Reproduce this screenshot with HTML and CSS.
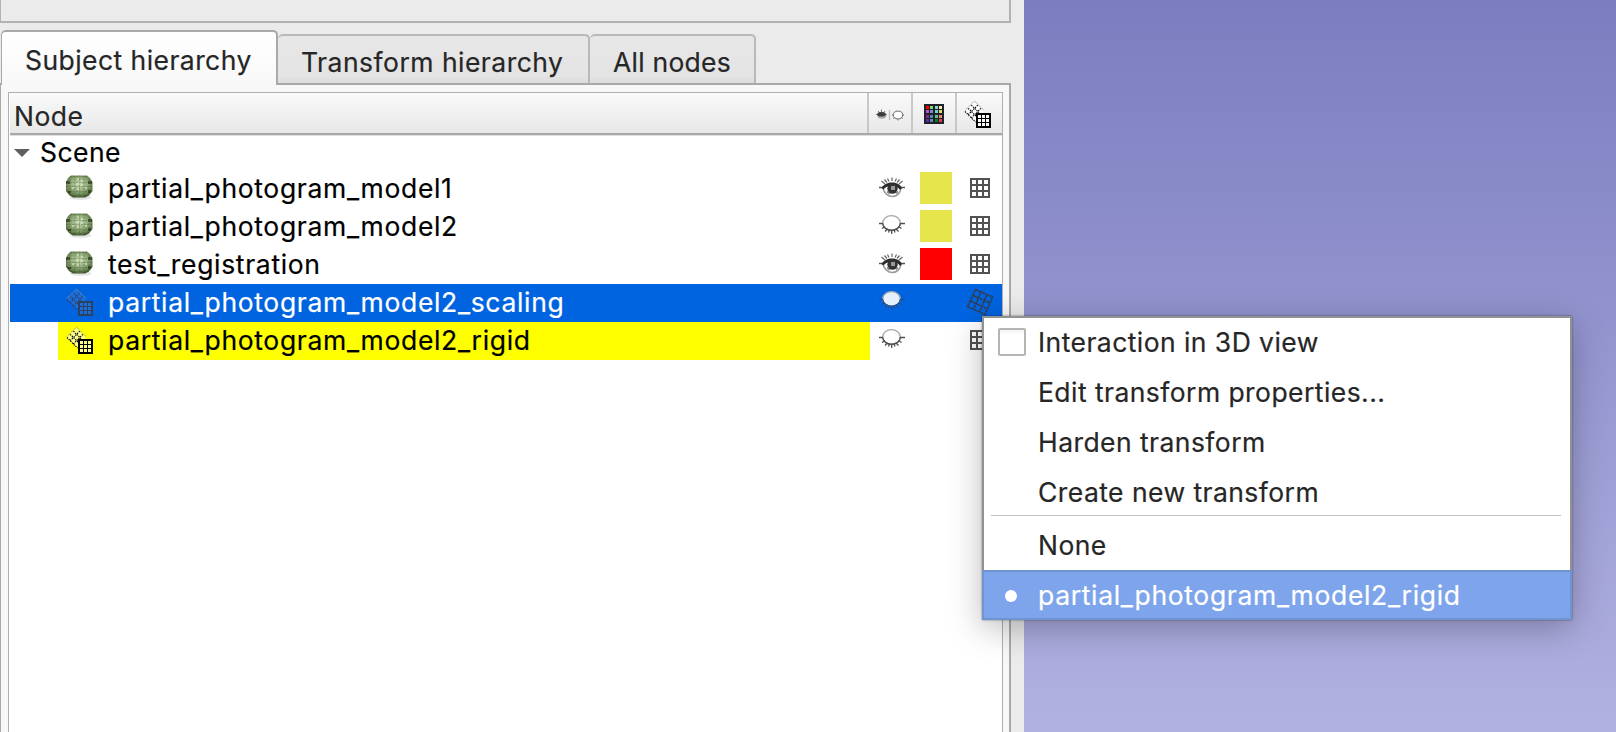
FILE: index.html
```html
<!DOCTYPE html>
<html lang="en">
<head>
<meta charset="utf-8">
<title>Subject hierarchy</title>
<link rel="stylesheet" href="styles.css">
</head>
<body>
<svg class="defs" width="0" height="0">
  <defs>
    <radialGradient id="ballFill" cx="0.5" cy="0.4" r="0.62">
      <stop offset="0" stop-color="#c9dab2"/><stop offset="0.5" stop-color="#93ac7b"/><stop offset="0.85" stop-color="#607a4b"/><stop offset="1" stop-color="#3b4d28"/>
    </radialGradient>
    <symbol id="ball" viewBox="0 0 30 28">
      <ellipse cx="15.5" cy="23.500" rx="11" ry="2.500" fill="#000" opacity="0.1"/>
      <path d="M6 1.500H22L25 4L27.500 8V17L24 21.500L20 23.500H8L4 21L1 17V8L3 4Z" fill="url(#ballFill)"/>
      <path d="M5 2.500H23M2 8.500H27M1 12.500H27M2 17.500H26M6 21.500H22M10 2V23M14.500 1.500V23.500M19 2V23M5 5V20M24 5V20" stroke="#33461f" stroke-width="1" opacity="0.32" stroke-dasharray="2 1"/>
      <path d="M12 4h2v2h-2zM16 6h2v2h-2zM11 9h2v2h-2zM16 10h2v2h-2zM7 13h2v2h-2zM12 14h2v2h-2zM20 13h2v2h-2z" fill="#dbe8c8" opacity="0.6"/>
      <path d="M1 7h4v3h-4zM23 7h4v3h-4zM3 17h3v2h-3zM23 16h3v3h-3z" fill="#1f2b14" opacity="0.6"/>
    </symbol>
    <symbol id="eye" viewBox="0 0 26 21">
      <path d="M13 0.500V4M8.500 1.500L10 4.500M17.500 1.500L16 4.500M2.500 4L6 7M23.500 4L20 7M5.500 2.500L8 5.500M20.500 2.500L18 5.500" stroke="#666" stroke-width="1.200"/>
      <path d="M0 10.500H5M21 10.500H26" stroke="#555" stroke-width="1.400"/>
      <path d="M4 11C5 16 9 19.500 13.500 19.500C18 19.500 21.500 16 22 11" fill="#fff" stroke="#999" stroke-width="1.500"/>
      <path d="M2.500 11C5 7 9 5.500 13 5.500C17 5.500 21 7 23 11L21 13C19 10 17 9 13 9C9 9 6 10 4.500 12.500Z" fill="#2a2a2a"/>
      <circle cx="13.500" cy="11.500" r="5.200" fill="#333"/>
      <rect x="12" y="9" width="4" height="4" fill="#999"/>
      <path d="M8 14.500L10.500 17M19 14.500L17 16.500" stroke="#777" stroke-width="1.200"/>
    </symbol>
    <symbol id="closed" viewBox="0 0 26 21">
      <ellipse class="lid" cx="12.500" cy="8" rx="8.800" ry="7.300" stroke="#a8a8a8" stroke-width="1.300"/>
      <path class="lash" d="M3.500 8C4 12.500 8 15.300 12.500 15.300C17 15.300 21 12.500 21.500 8" fill="none" stroke-width="1.400"/>
      <path class="lash" d="M0 8.500H4M21 8.500H26M3 13.500L6 11.500M22.500 13.500L19.500 11.500M6 16.500L8.500 14M19.500 16.500L17 14M9.500 17.500L10.500 15M12.700 15V19M16 17.500L15 15" stroke-width="1.300"/>
    </symbol>
    <symbol id="grid" viewBox="0 0 20 20">
      <path d="M1 1H19V19H1ZM7 1V19M13 1V19M1 7H19M1 13H19" fill="#fff" stroke="#525252" stroke-width="2"/>
    </symbol>
    <symbol id="xform" viewBox="0 0 28 28">
      <path d="M1 11.500L10.500 2L20 11.500L10.500 21Z" class="cell"/>
      <path d="M1 10.500L10.500 1L20 10.500" fill="none" stroke="#999" stroke-width="1" stroke-dasharray="1.400 0.700"/>
      <path d="M1 11.500L11.500 22M4.200 8.300L13.700 17.800M7.400 5.100L15 12.700M4.200 14.700L13.700 5.200M7.400 17.900L17 8.300" fill="none" stroke="currentColor" stroke-width="1.100" stroke-dasharray="1.400 1"/>
      <rect x="12" y="13" width="15" height="15" class="cell"/>
      <path d="M12 13H27V28H12ZM14 15V18H17V15ZM18 15V18H21V15ZM22 15V18H25V15ZM14 19V22H17V19ZM18 19V22H21V19ZM22 19V22H25V19ZM14 23V26H17V23ZM18 23V26H21V23ZM22 23V26H25V23Z" fill="currentColor" fill-rule="evenodd"/>
    </symbol>
    <symbol id="tilted" viewBox="0 0 28 28">
      <path d="M9.500 1.500L26.500 9L19 26.500L1.500 18.500ZM15 4L7.500 21.500M21 6.500L13.500 24M7 7.500L24 15M4.500 13L21.500 21" fill="none" stroke="#353c46" stroke-width="1.500" stroke-dasharray="3 0.600"/>
    </symbol>
  </defs>
</svg>
<div class="app">
  <div class="panel">
    <div class="upper"></div>
    <div class="tabs">
      <div class="tab active">Subject hierarchy</div>
      <div class="tab second">Transform hierarchy</div>
      <div class="tab third">All nodes</div>
    </div>
    <div class="pane">
      <div class="tree">
        <div class="header">
          <div class="h-name">Node</div>
          <div class="h-cell"><svg class="h-eyes" viewBox="0 0 28 14">
            <path d="M0 6.500H11M2 3L4 5M5.500 1.500V4M9 3L7.500 5" stroke="#777" stroke-width="1"/>
            <ellipse cx="5.800" cy="7.500" rx="4.500" ry="3.200" fill="#aaa"/><ellipse cx="5.500" cy="6.200" rx="4.200" ry="2.300" fill="#3c3c3c"/>
            <path d="M13.500 2V12" stroke="#c2c2c2" stroke-width="1.400"/>
            <ellipse cx="22" cy="7" rx="4.800" ry="3.900" fill="#fff" stroke="#8a8a8a" stroke-width="1.200"/>
            <path d="M16 7H18M26 7H28M17.500 10.500L19 9M26.500 10.500L25 9M22 11V12.500" stroke="#777"/>
          </svg></div>
          <div class="h-cell"><svg class="h-palette" viewBox="0 0 20 20">
            <rect width="20" height="20" fill="#20202a"/>
            <g><rect x="2" y="2" width="3" height="3" fill="#f00"/><rect x="6" y="2" width="3" height="3" fill="#7be05c"/><rect x="11" y="2" width="3" height="3" fill="#95cbd3"/><rect x="15" y="2" width="3" height="3" fill="#f3efab"/>
            <rect x="2" y="6" width="3" height="3" fill="#c04fc9"/><rect x="6" y="6" width="3" height="3" fill="#7e8bc6"/><rect x="11" y="6" width="3" height="3" fill="#66d6dd"/><rect x="15" y="6" width="3" height="3" fill="#ddda64"/>
            <rect x="2" y="11" width="3" height="3" fill="#8e2591"/><rect x="6" y="11" width="3" height="3" fill="#44919b"/><rect x="11" y="11" width="3" height="3" fill="#62bd9c"/><rect x="15" y="11" width="3" height="3" fill="#e58a68"/>
            <rect x="2" y="15" width="3" height="3" fill="#5c2c97"/><rect x="6" y="15" width="3" height="3" fill="#6481c7"/><rect x="11" y="15" width="3" height="3" fill="#078008"/><rect x="15" y="15" width="3" height="3" fill="#dc3c59"/></g>
          </svg></div>
          <div class="h-cell last"><svg class="xf"><use href="#xform"/></svg></div>
        </div>
        <div class="scene"><svg class="arrow" viewBox="0 0 16 8"><path d="M0 0H16L8 8Z" fill="#5f5f5f"/></svg>Scene</div>
        <div class="row">
          <div class="name"><svg class="ball"><use href="#ball"/></svg>partial_photogram_model1</div>
          <svg class="eye"><use href="#eye"/></svg><i class="swatch"></i><svg class="grid"><use href="#grid"/></svg>
        </div>
        <div class="row">
          <div class="name"><svg class="ball"><use href="#ball"/></svg>partial_photogram_model2</div>
          <svg class="eye"><use href="#closed"/></svg><i class="swatch"></i><svg class="grid"><use href="#grid"/></svg>
        </div>
        <div class="row">
          <div class="name"><svg class="ball"><use href="#ball"/></svg>test_registration</div>
          <svg class="eye"><use href="#eye"/></svg><i class="swatch red"></i><svg class="grid"><use href="#grid"/></svg>
        </div>
        <div class="row selected">
          <div class="name"><svg class="xf"><use href="#xform"/></svg>partial_photogram_model2_scaling</div>
          <svg class="eye"><use href="#closed"/></svg><i></i><svg class="tilt"><use href="#tilted"/></svg>
        </div>
        <div class="row marked">
          <div class="name"><svg class="xf"><use href="#xform"/></svg>partial_photogram_model2_rigid</div>
          <svg class="eye"><use href="#closed"/></svg><i></i><svg class="grid"><use href="#grid"/></svg>
        </div>
      </div>
    </div>
  </div>
  <div class="view"></div>
</div>
<div class="menu">
  <div class="item"><i class="check"></i>Interaction in 3D view</div>
  <div class="item">Edit transform properties...</div>
  <div class="item">Harden transform</div>
  <div class="item">Create new transform</div>
  <div class="rule"></div>
  <div class="item">None</div>
  <div class="item current"><i class="dot"></i>partial_photogram_model2_rigid</div>
</div>
</body>
</html>
```
FILE: styles.css
```css
* { box-sizing: border-box; }
body {
  margin: 0;
  width: 1616px;
  height: 732px;
  overflow: hidden;
  position: relative;
  font: 26.5px/38px Inter, "Liberation Sans", sans-serif;
  letter-spacing: 0.44px;
  -webkit-text-stroke: 0.2px currentColor;
  white-space: nowrap;
  color: #262626;
}
svg { display: block; flex: none; -webkit-text-stroke: 0; }
.defs { position: absolute; }
.app { display: flex; height: 732px; }
.panel { width: 1024px; background: #ebebeb; display: flex; flex-direction: column; }
.upper { width: 1011px; height: 23px; flex: none; border: 2px solid #b2b2b2; border-left-width: 1px; border-top: 0; }
.tabs { display: flex; align-items: flex-end; height: 62px; flex: none; padding-left: 1px; width: 1011px; border-bottom: 2px solid #a9a9a9; }
.tab { height: 49px; border: 2px solid #b9b9b9; border-bottom: 0; border-left-width: 0; border-radius: 5px 5px 0 0; background: linear-gradient(#e7e7e7, #e4e4e4 85%, #dcdcdc); padding: 7px 0 0 24px; }
.tab.active { width: 277px; height: 55px; margin-bottom: -2px; border-color: #a9a9a9; border-left-width: 1px; background: linear-gradient(#fff, #f8f8f8); padding: 9px 0 0 23px; }
.tab.second { width: 312px; padding-left: 23px; letter-spacing: 0.48px; }
.tab.third { width: 166px; padding-left: 23px; letter-spacing: 0.25px; }
.pane { flex: 1; width: 1011px; border: 2px solid #a9a9a9; border-left-width: 1px; border-top: 0; border-bottom: 0; background: #f8f8f8; padding: 7px 6px 0 7px; display: flex; }
.tree { flex: 1; border: 1px solid #b0b0b0; border-bottom: 0; background: #fff; color: #000; }
.header { display: flex; height: 43px; margin-left: 1px; border-bottom: 1px solid #dedede; box-shadow: inset 0 -2px #a9a9a9; background: linear-gradient(#fafafa, #e7e7e7); padding-bottom: 2px; color: #262626; }
.h-name { width: 859px; padding: 4px 0 0 4px; border-right: 2px solid #c8c8c8; }
.h-cell { width: 44px; border-right: 2px solid #c8c8c8; padding: 11px 0 0 11px; }
.h-cell:nth-child(2) { padding: 15px 0 0 7px; }
.h-cell.last { border: 0; padding: 7px 0 0 7px; }
.h-eyes { width: 28px; height: 14px; }
.h-palette { width: 20px; height: 20px; }
.xf { width: 28px; height: 28px; color: #000; }
.cell { fill: var(--cell, #fff); }
.scene { display: flex; height: 34px; line-height: 33px; }
.arrow { width: 16px; height: 8px; margin: 13px 10px 0 5px; }
.row { display: grid; grid-template-columns: 860px 44px 44px 44px; height: 38px; margin-left: 1px; }
.name { display: flex; margin-left: 48px; padding-left: 8px; line-height: 36px; letter-spacing: 0.67px; }
.ball { width: 30px; height: 28px; margin: 4px 13px 0 -1px; }
.name .xf { margin: 4px 14px 0 0; }
.eye { width: 26px; height: 21px; margin: 7px 0 0 9px; }
.lid { fill: var(--lid, #fff); }
.lash { stroke: var(--lash, #505050); }
.swatch { width: 32px; height: 32px; margin: 2px 0 0 6px; background: #e6e64c; }
.red { background: #f00; }
.grid { width: 20px; height: 20px; margin: 8px 0 0 12px; }
.tilt { width: 28px; height: 28px; margin: 4px 0 0 8px; }
.selected { background: #0064e1; color: #fff; --cell: #1c6cd9; --lid: #e5f0ff; --lash: #1d4f94; }
.selected .xf { color: #2a4260; }
.marked .name { background: #ff0; }
.marked { --cell: #ffff8c; }
.view { flex: 1; background: linear-gradient(#7b7dc0, #b1b1e1); }
.menu { position: absolute; left: 982px; top: 316px; width: 590px; height: 304px; border: 2px solid #929292; background: #fff; box-shadow: 0 0 2px rgba(0,0,0,.45), 0 8px 32px rgba(0,0,0,.27); }
.item { display: flex; height: 50px; line-height: 48px; padding-left: 54px; }
.check { width: 28px; height: 28px; margin: 10px 12px 0 -40px; border: 2px solid #b5b5b5; border-radius: 2px; background: linear-gradient(#f2f2f2, #fff 20%); }
.rule { height: 1px; background: #c2c2c2; margin: -3px 9px 5px 7px; }
.current { margin: -1px -2px 0; padding-left: 54px; border: 2px solid #7094d2; background: #7ea5eb; color: #fff; line-height: 46px; letter-spacing: 0.67px; }
.dot { width: 12px; height: 12px; border-radius: 50%; background: #fff; margin: 18px 21px 0 -33px; }
```
